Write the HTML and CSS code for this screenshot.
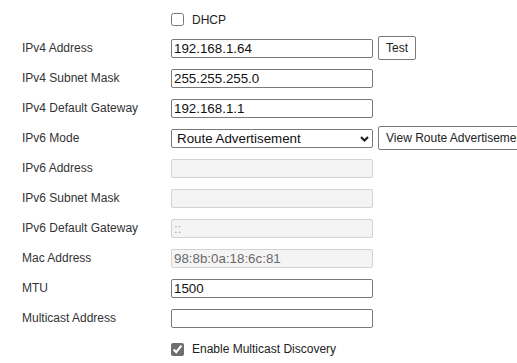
FILE: index.html
```html
<!DOCTYPE html>
<html lang="en">
<head>
    <meta charset="UTF-8">
    <meta name="viewport" content="width=device-width, initial-scale=1.0">
    <title>TCP/IP</title>
    <link rel="stylesheet" href="styles.css">
</head>
<body>
    <!-- impostazioni di rete -->
    <div class="form">
        <div class="riga riga-dhcp">
            <span class="etichetta"></span>
            <label class="spunta"><input type="checkbox"> DHCP</label>
        </div>
        <div class="riga">
            <span class="etichetta">IPv4 Address</span>
            <div class="campo">
                <input type="text" class="testo" value="192.168.1.64">
                <button class="tasto">Test</button>
            </div>
        </div>
        <div class="riga">
            <span class="etichetta">IPv4 Subnet Mask</span>
            <div class="campo"><input type="text" class="testo" value="255.255.255.0"></div>
        </div>
        <div class="riga">
            <span class="etichetta">IPv4 Default Gateway</span>
            <div class="campo"><input type="text" class="testo" value="192.168.1.1"></div>
        </div>
        <div class="riga">
            <span class="etichetta">IPv6 Mode</span>
            <div class="campo">
                <div class="scelta">
                    <select class="menu">
                        <option>Route Advertisement</option>
                        <option>DHCP</option>
                        <option>Manual</option>
                    </select>
                    <svg class="freccia" width="9" height="6" viewBox="0 0 9 6"><path d="M1 1 L4.5 4.5 L8 1" fill="none" stroke="#1a1a1a" stroke-width="2"/></svg>
                </div>
                <button class="tasto">View Route Advertisement</button>
            </div>
        </div>
        <div class="riga">
            <span class="etichetta">IPv6 Address</span>
            <div class="campo"><input type="text" class="testo" value="" disabled></div>
        </div>
        <div class="riga">
            <span class="etichetta">IPv6 Subnet Mask</span>
            <div class="campo"><input type="text" class="testo" value="" disabled></div>
        </div>
        <div class="riga">
            <span class="etichetta">IPv6 Default Gateway</span>
            <div class="campo"><input type="text" class="testo chiaro" value="::" disabled></div>
        </div>
        <div class="riga">
            <span class="etichetta">Mac Address</span>
            <div class="campo"><input type="text" class="testo" value="98:8b:0a:18:6c:81" disabled></div>
        </div>
        <div class="riga">
            <span class="etichetta">MTU</span>
            <div class="campo"><input type="text" class="testo" value="1500"></div>
        </div>
        <div class="riga">
            <span class="etichetta">Multicast Address</span>
            <div class="campo"><input type="text" class="testo" value=""></div>
        </div>
        <div class="riga riga-ultima">
            <span class="etichetta"></span>
            <label class="spunta"><input type="checkbox" class="grigia" checked> Enable Multicast Discovery</label>
        </div>
    </div>
</body>
</html>
```

FILE: styles.css
```css
:root{
    --text-color: #333333;
    --input-text: #111111;
    --border-color: #7a7a7a;
    --off-bg: #f4f4f4;
    --off-border: #d2d2d2;
}
html, body{
    margin: 0;
    overflow: hidden;
}
body{
    background-color: #ffffff;
    color: var(--text-color);
    font-family: "Liberation Sans", Arial, sans-serif;
    font-size: 12px;
}
.form{
    padding-top: 6px;
    padding-left: 22px;
    width: 700px;
}
.riga{
    display: flex;
    align-items: center;
    height: 30px;
}
.riga-dhcp{
    height: 27px;
}
.riga-ultima{
    height: 32px;
}
.etichetta{
    width: 149px;
    flex: 0 0 auto;
}
.campo{
    display: flex;
    align-items: center;
    gap: 5px;
}
.testo{
    box-sizing: border-box;
    width: 202px;
    height: 19px;
    margin: 0;
    padding: 0 2px;
    border: 1px solid var(--border-color);
    border-radius: 2px;
    font-family: "Liberation Sans", Arial, sans-serif;
    font-size: 13.33px;
    color: var(--input-text);
    background-color: #ffffff;
}
.testo:disabled{
    background-color: var(--off-bg);
    border-color: var(--off-border);
    color: #6a6a6a;
}
.chiaro:disabled{
    color: #a8a8a8;
}
.scelta{
    position: relative;
}
.menu{
    box-sizing: border-box;
    width: 202px;
    height: 19px;
    margin: 0;
    padding: 0 0 0 5px;
    border: 1px solid var(--border-color);
    border-radius: 2px;
    appearance: none;
    -webkit-appearance: none;
    background-color: #ffffff;
    font-family: "Liberation Sans", Arial, sans-serif;
    font-size: 13.33px;
    color: var(--input-text);
}
.freccia{
    position: absolute;
    left: 189px;
    top: 7px;
}
.tasto{
    box-sizing: border-box;
    height: 24px;
    margin: 0;
    padding: 0 7px;
    border: 1px solid var(--border-color);
    border-radius: 2px;
    background-color: #ffffff;
    font-family: "Liberation Sans", Arial, sans-serif;
    font-size: 12px;
    color: #222222;
    white-space: nowrap;
    flex: 0 0 auto;
}
.spunta{
    display: flex;
    align-items: center;
    gap: 8px;
    color: #222222;
}
.spunta input{
    width: 13px;
    height: 13px;
    margin: 0;
}
.grigia{
    accent-color: #6e6e6e;
}
```
